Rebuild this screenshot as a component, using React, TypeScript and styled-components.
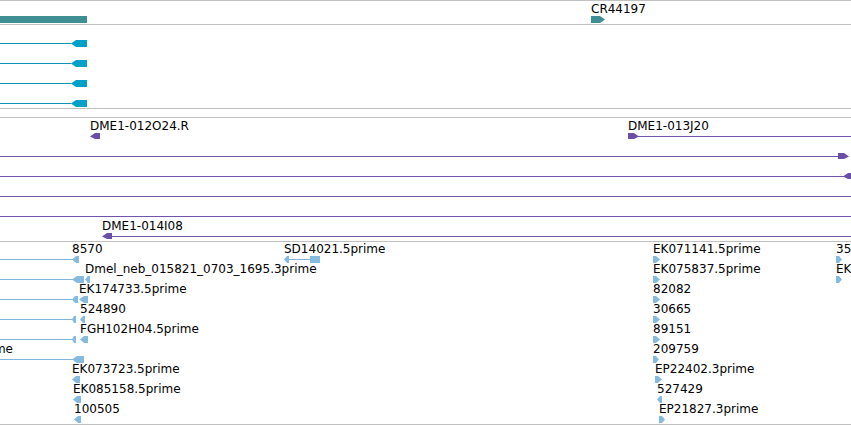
import styled, { createGlobalStyle } from 'styled-components';

type PartKind = 'line' | 'box' | 'left' | 'right';
type Part = [PartKind, number, number];

type Feature = {
  row: number;
  parts: Part[];
  label?: string;
  lx?: number;
  // right edge of label, for names cut off at the left of the view
  rx?: number;
};

type TrackDef = {
  id: string;
  top: number;
  height: number;
  fill: string;
  stroke: string;
  up: number;
  down: number;
  features: Feature[];
};

const GlobalStyle = createGlobalStyle`
  html, body {
    margin: 0;
    padding: 0;
    background: #ffffff;
  }
  body {
    font-family: 'DejaVu Sans', 'Liberation Sans', sans-serif;
    font-size: 12px;
    color: #000000;
    overflow: hidden;
  }
`;

const Browser = styled.div`
  width: 851px;
  display: flex;
  flex-direction: column;
  border-bottom: 1px solid #c0c0c0;
`;

const Track = styled.div<{ $height: number }>`
  position: relative;
  height: ${(p) => p.$height - 1}px;
  border-top: 1px solid #c0c0c0;
  overflow: hidden;
`;

const Canvas = styled.svg`
  position: absolute;
  left: 0;
  top: 0;
  display: block;
`;

const Label = styled.span.attrs<{ $x?: number; $rx?: number; $y: number }>((p) => ({
  style: {
    top: `${p.$y}px`,
    left: p.$x !== undefined ? `${p.$x}px` : undefined,
    right: p.$rx !== undefined ? `${851 - p.$rx}px` : undefined,
  },
}))<{ $x?: number; $rx?: number; $y: number }>`
  position: absolute;
  white-space: nowrap;
  line-height: 14px;
  font-size: 12px;
  color: #000000;
`;

const cyanRow = (row: number): Feature => ({ row, parts: [['line', 0, 71], ['left', 71, 87]] });

const TRACKS: TrackDef[] = [
  {
    id: 'genes',
    top: 0,
    height: 24,
    fill: '#3f8e93',
    stroke: '#3f8e93',
    up: 3,
    down: 3,
    features: [
      { row: 19, parts: [['box', 0, 87]] },
      { row: 19, parts: [['right', 591, 605]], label: 'CR44197', lx: 591 },
    ],
  },
  {
    id: 'transcripts',
    top: 24,
    height: 84,
    fill: '#00a1c8',
    stroke: '#1491b3',
    up: 3,
    down: 3,
    features: [cyanRow(43), cyanRow(63), cyanRow(83), cyanRow(103)],
  },
  {
    id: 'empty',
    top: 108,
    height: 9,
    fill: '#000',
    stroke: '#000',
    up: 3,
    down: 3,
    features: [],
  },
  {
    id: 'clones',
    top: 117,
    height: 124,
    fill: '#6b4fa7',
    stroke: '#7155ac',
    up: 3,
    down: 2,
    features: [
      { row: 136, parts: [['left', 90, 100]], label: 'DME1-012O24.R', lx: 90 },
      { row: 136, parts: [['line', 636, 851], ['right', 628, 639]], label: 'DME1-013J20', lx: 628 },
      { row: 156, parts: [['line', 0, 840], ['right', 838, 849]] },
      { row: 176, parts: [['line', 0, 845], ['left', 843, 853]] },
      { row: 196, parts: [['line', 0, 851]] },
      { row: 216, parts: [['line', 0, 851]] },
      { row: 236, parts: [['line', 110, 851], ['left', 102, 112]], label: 'DME1-014I08', lx: 102 },
    ],
  },
  {
    id: 'ests',
    top: 241,
    height: 183,
    fill: '#86bbe0',
    stroke: '#7fb6de',
    up: 3,
    down: 3,
    features: [
      { row: 259, parts: [['line', 0, 73], ['left', 72, 79]], label: '8570', lx: 72 },
      { row: 259, parts: [['left', 284, 289], ['line', 288, 311], ['box', 310, 320]], label: 'SD14021.5prime', lx: 284 },
      { row: 259, parts: [['right', 653, 660]], label: 'EK071141.5prime', lx: 653 },
      { row: 259, parts: [['right', 836, 842]], label: '35', lx: 836 },

      { row: 279, parts: [['line', 0, 73], ['left', 72, 84], ['left', 85, 90]], label: 'Dmel_neb_015821_0703_1695.3prime', lx: 85 },
      { row: 279, parts: [['right', 653, 660]], label: 'EK075837.5prime', lx: 653 },
      { row: 279, parts: [['right', 836, 842]], label: 'EK', lx: 836 },

      { row: 299, parts: [['line', 0, 73], ['left', 72, 78], ['left', 79, 88]], label: 'EK174733.5prime', lx: 79 },
      { row: 299, parts: [['right', 653, 660]], label: '82082', lx: 653 },

      { row: 319, parts: [['line', 0, 73], ['left', 72, 76], ['left', 80, 85]], label: '524890', lx: 80 },
      { row: 319, parts: [['right', 653, 660]], label: '30665', lx: 653 },

      { row: 339, parts: [['line', 0, 73], ['left', 72, 76], ['left', 80, 88]], label: 'FGH102H04.5prime', lx: 80 },
      { row: 339, parts: [['right', 653, 660]], label: '89151', lx: 653 },

      { row: 359, parts: [['line', 0, 73], ['left', 72, 84]], label: 'EK052196.5prime', rx: 13 },
      { row: 359, parts: [['right', 653, 659]], label: '209759', lx: 653 },

      { row: 379, parts: [['left', 72, 80]], label: 'EK073723.5prime', lx: 72 },
      { row: 379, parts: [['right', 655, 662]], label: 'EP22402.3prime', lx: 655 },

      { row: 399, parts: [['left', 73, 81]], label: 'EK085158.5prime', lx: 73 },
      { row: 399, parts: [['left', 657, 662]], label: '527429', lx: 657 },

      { row: 419, parts: [['left', 74, 81]], label: '100505', lx: 74 },
      { row: 419, parts: [['right', 659, 665]], label: 'EP21827.3prime', lx: 659 },
    ],
  },
];

const Glyph = ({ part, y, t }: { part: Part; y: number; t: TrackDef }) => {
  const [kind, x1, x2] = part;
  const top = y - t.up;
  const bottom = y + 1 + t.down;
  const mid = y + 0.5;
  if (kind === 'line') {
    return <line x1={x1} x2={x2} y1={mid} y2={mid} stroke={t.stroke} strokeWidth={1} />;
  }
  if (kind === 'box') {
    return <rect x={x1} y={top} width={x2 - x1} height={bottom - top} fill={t.fill} />;
  }
  const tip = Math.min(5, Math.max(2, Math.round((x2 - x1) / 2)));
  const pts =
    kind === 'left'
      ? [[x1, mid], [x1 + tip, top], [x2, top], [x2, bottom], [x1 + tip, bottom]]
      : [[x2, mid], [x2 - tip, top], [x1, top], [x1, bottom], [x2 - tip, bottom]];
  return <polygon points={pts.map((p) => p.join(',')).join(' ')} fill={t.fill} />;
};

const TrackView = ({ t }: { t: TrackDef }) => {
  const origin = t.top + 1;
  const h = t.height - 1;
  return (
    <Track $height={t.height}>
      <Canvas width={851} height={h} viewBox={`0 0 851 ${h}`}>
        {t.features.map((f, i) =>
          f.parts.map((p, j) => <Glyph key={`${i}-${j}`} part={p} y={f.row - origin} t={t} />)
        )}
      </Canvas>
      {t.features
        .filter((f) => f.label)
        .map((f) => (
          <Label key={f.label} $x={f.lx} $rx={f.rx} $y={f.row - origin - 17}>
            {f.label}
          </Label>
        ))}
    </Track>
  );
};

const App = () => (
  <>
    <GlobalStyle />
    <Browser>
      {TRACKS.map((t) => (
        <TrackView key={t.id} t={t} />
      ))}
    </Browser>
  </>
);

export default App;
